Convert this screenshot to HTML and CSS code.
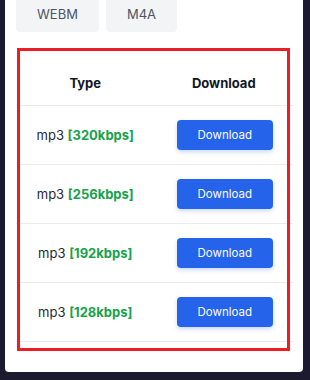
FILE: index.html
```html
<!DOCTYPE html>
<html>
<head>
<meta charset="utf-8">
<link rel="stylesheet" href="styles.css">
</head>
<body>
<div class="card">
  <div class="formats">
    <button class="fmt">WEBM</button>
    <button class="fmt fmt-narrow">M4A</button>
  </div>
  <div class="table-wrap">
    <table class="dl-table">
      <thead>
        <tr><th>Type</th><th>Download</th></tr>
      </thead>
      <tbody>
        <tr><td>mp3 <span class="rate">[320kbps]</span></td><td><button class="dl-btn">Download</button></td></tr>
        <tr><td>mp3 <span class="rate">[256kbps]</span></td><td><button class="dl-btn">Download</button></td></tr>
        <tr><td>mp3 <span class="rate">[192kbps]</span></td><td><button class="dl-btn">Download</button></td></tr>
        <tr><td>mp3 <span class="rate">[128kbps]</span></td><td><button class="dl-btn">Download</button></td></tr>
      </tbody>
    </table>
  </div>
</div>
</body>
</html>
```
FILE: styles.css
```css
html, body {
  margin: 0;
  padding: 0;
  background: #1b1a2e;
  height: 380px;
  overflow: hidden;
}
body {
  font-family: Inter, "Open Sans", sans-serif;
}
.card {
  margin: -20px 0 0 5px;
  width: 298px;
  box-sizing: border-box;
  background: #ffffff;
  border-radius: 4px;
  padding: 12px 10px 30px 11px;
}
.formats {
  display: flex;
  gap: 7px;
}
.fmt {
  width: 83px;
  height: 40px;
  border: none;
  border-radius: 4px;
  background: #f3f4f6;
  color: #4b5563;
  font-family: inherit;
  font-size: 13px;
  padding: 0;
  padding-top: 4px;
}
.fmt-narrow { width: 71px; }
.table-wrap {
  position: relative;
  margin-top: 28px;
}
.table-wrap::after {
  content: "";
  position: absolute;
  left: 1px;
  right: 3px;
  top: -12px;
  bottom: -9px;
  border: 3px solid #ee1c25;
  pointer-events: none;
}
.dl-table {
  width: 100%;
  border-collapse: collapse;
  table-layout: fixed;
}
.dl-table th {
  height: 45px;
  font-size: 13px;
  font-weight: 700;
  color: #111827;
  text-align: center;
  border-bottom: 1px solid #ebebeb;
  padding: 0;
}
.dl-table td {
  height: 58px;
  text-align: center;
  border-bottom: 1px solid #ebebeb;
  padding: 0;
  font-size: 13px;
  color: #1f2937;
}
.rate {
  color: #16a34a;
  font-weight: 700;
}
.dl-btn {
  width: 96px;
  height: 30px;
  border: none;
  border-radius: 4px;
  background: #2563eb;
  color: #ffffff;
  font-family: inherit;
  font-size: 11.5px;
  box-shadow: 0 2px 4px rgba(37, 99, 235, 0.25);
  margin-left: 2px;
}
```
